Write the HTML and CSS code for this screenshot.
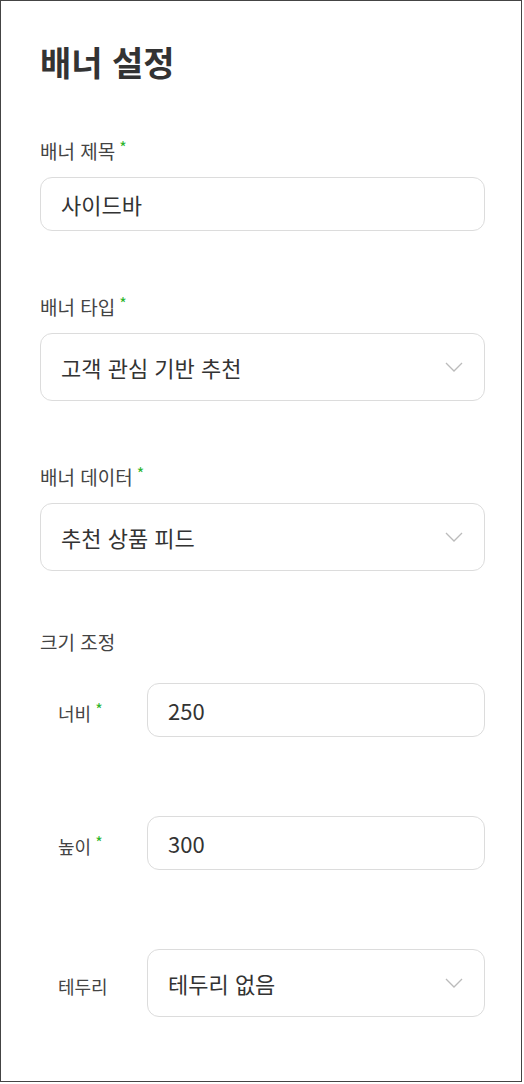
FILE: index.html
```html
<!DOCTYPE html>
<html lang="ko">
<head>
    <meta charset="UTF-8">
    <meta name="viewport" content="width=device-width, initial-scale=1.0">
    <title>배너 설정</title>
    <link rel="stylesheet" href="styles.css">
</head>
<body>
    <div class="panel">
        <h1>배너 설정</h1>

        <div class="field">
            <label for="bannerTitle">배너 제목<span class="req">*</span></label>
            <input type="text" id="bannerTitle" class="text-input" value="사이드바">
        </div>

        <div class="field">
            <label for="bannerType">배너 타입<span class="req">*</span></label>
            <div class="select-wrap">
                <select id="bannerType" class="select-input">
                    <option selected>고객 관심 기반 추천</option>
                    <option>최근 본 상품</option>
                </select>
                <svg class="chevron" width="18" height="10" viewBox="0 0 18 10"><path d="M1 1 L9 9 L17 1" fill="none" stroke="#bbb" stroke-width="1.3"/></svg>
            </div>
        </div>

        <div class="field">
            <label for="bannerData">배너 데이터<span class="req">*</span></label>
            <div class="select-wrap">
                <select id="bannerData" class="select-input">
                    <option selected>추천 상품 피드</option>
                    <option>인기 상품 피드</option>
                </select>
                <svg class="chevron" width="18" height="10" viewBox="0 0 18 10"><path d="M1 1 L9 9 L17 1" fill="none" stroke="#bbb" stroke-width="1.3"/></svg>
            </div>
        </div>

        <div class="size-group">
            <p class="group-title">크기 조정</p>
            <div class="size-row">
                <label for="bannerWidth">너비<span class="req">*</span></label>
                <input type="text" id="bannerWidth" class="text-input" value="250">
            </div>
            <div class="size-row">
                <label for="bannerHeight">높이<span class="req">*</span></label>
                <input type="text" id="bannerHeight" class="text-input" value="300">
            </div>
            <div class="size-row">
                <label for="bannerBorder">테두리</label>
                <div class="select-wrap">
                    <select id="bannerBorder" class="select-input">
                        <option selected>테두리 없음</option>
                        <option>1px 실선</option>
                    </select>
                    <svg class="chevron" width="18" height="10" viewBox="0 0 18 10"><path d="M1 1 L9 9 L17 1" fill="none" stroke="#bbb" stroke-width="1.3"/></svg>
                </div>
            </div>
        </div>
    </div>
</body>
</html>
```

FILE: styles.css
```css
body {
    margin: 0;
    font-family: "Noto Sans CJK KR", "Noto Sans", sans-serif;
    background-color: #fff;
    color: #333;
}
.panel {
    width: 522px;
    height: 1082px;
    box-sizing: border-box;
    border: 1px solid #444;
    padding: 41px 36px 0 39px;
}
h1 {
    margin: 0 0 57px;
    font-size: 34px;
    line-height: 40px;
    font-weight: 700;
    color: #333;
}
label, .group-title {
    display: block;
    margin: 0;
    font-size: 19px;
    line-height: 24px;
    color: #444;
}
.req {
    color: #2cb52c;
    font-size: 16px;
    vertical-align: top;
    line-height: 16px;
    margin-left: 4px;
}
.field {
    margin-bottom: 64px;
}
.field label {
    margin-bottom: 14px;
}
.text-input, .select-input {
    display: block;
    width: 100%;
    box-sizing: border-box;
    border: 1.5px solid #dcdcdc;
    border-radius: 12px;
    background-color: #fff;
    font-family: inherit;
    font-size: 22px;
    color: #333;
    padding: 0 20px;
    outline: none;
}
.text-input {
    height: 54px;
}
.select-input {
    height: 68px;
    appearance: none;
    -webkit-appearance: none;
    padding-right: 50px;
}
.select-wrap {
    position: relative;
    width: 100%;
}
.chevron {
    position: absolute;
    right: 22px;
    top: 29px;
    pointer-events: none;
}
.size-group {
    margin-top: -5px;
}
.group-title {
    margin-bottom: 29px;
}
.size-row {
    display: flex;
    align-items: center;
    margin-bottom: 79px;
}
.size-row label {
    flex: 0 0 107px;
    box-sizing: border-box;
    padding-left: 18px;
    padding-top: 5px;
    font-size: 18px;
}
.size-row .text-input, .size-row .select-wrap {
    flex: 1;
    min-width: 0;
}
```
